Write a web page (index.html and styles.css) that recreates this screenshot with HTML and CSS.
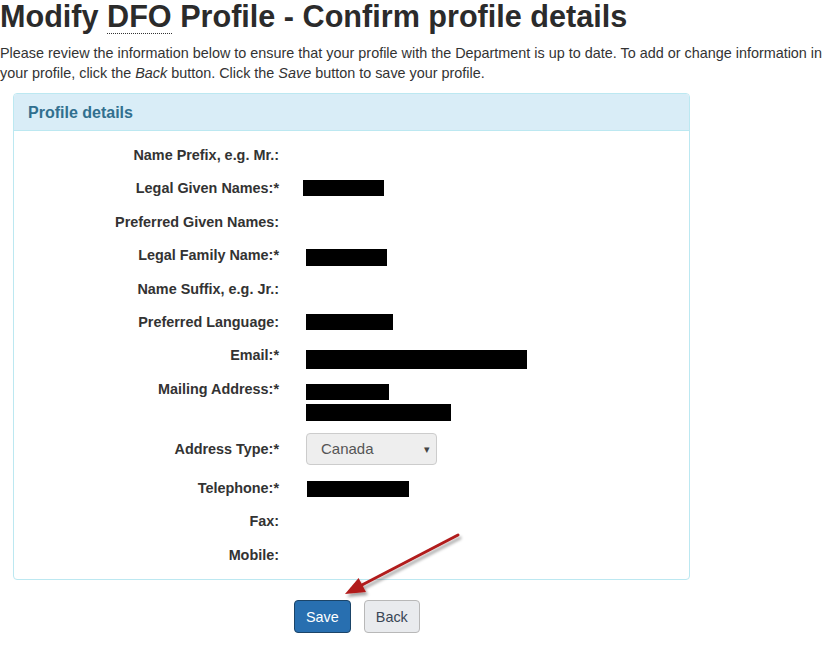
FILE: index.html
```html
<!DOCTYPE html>
<html>
<head>
  <meta charset="UTF-8">
  <title>Modify DFO Profile - Confirm profile details</title>
  <link rel="stylesheet" href="styles.css">
</head>
<body>
  <div class="page">
    <h1>Modify <abbr title="Fisheries and Oceans Canada">DFO</abbr> Profile - Confirm profile details</h1>
    <p class="intro">Please review the information below to ensure that your profile with the Department is up to date. To add or change information in your profile, click the <em>Back</em> button. Click the <em>Save</em> button to save your profile.</p>

    <div class="panel">
      <div class="panel-heading">Profile details</div>
      <div class="panel-body">
        <div class="field">
          <div class="field-label">Name Prefix, e.g. Mr.:</div>
          <div class="field-value"></div>
        </div>
        <div class="field">
          <div class="field-label">Legal Given Names:*</div>
          <div class="field-value"><span class="redact redact-shift" style="width: 81px"></span></div>
        </div>
        <div class="field">
          <div class="field-label">Preferred Given Names:</div>
          <div class="field-value"></div>
        </div>
        <div class="field">
          <div class="field-label">Legal Family Name:*</div>
          <div class="field-value"><span class="redact redact-low" style="width: 81px"></span></div>
        </div>
        <div class="field">
          <div class="field-label">Name Suffix, e.g. Jr.:</div>
          <div class="field-value"></div>
        </div>
        <div class="field">
          <div class="field-label">Preferred Language:</div>
          <div class="field-value"><span class="redact redact-high" style="width: 87px"></span></div>
        </div>
        <div class="field">
          <div class="field-label">Email:*</div>
          <div class="field-value"><span class="redact redact-tall" style="width: 221px"></span></div>
        </div>
        <div class="field field-address">
          <div class="field-label">Mailing Address:*</div>
          <div class="field-value">
            <span class="redact redact-line1" style="width: 83px"></span>
            <span class="redact redact-line2" style="width: 145px"></span>
          </div>
        </div>
        <div class="field field-select">
          <div class="field-label">Address Type:*</div>
          <div class="field-value">
            <div class="select">
              <span>Canada</span>
              <span class="select-caret">&#9662;</span>
            </div>
          </div>
        </div>
        <div class="field">
          <div class="field-label">Telephone:*</div>
          <div class="field-value"><span class="redact redact-phone" style="width: 102px"></span></div>
        </div>
        <div class="field">
          <div class="field-label">Fax:</div>
          <div class="field-value"></div>
        </div>
        <div class="field">
          <div class="field-label">Mobile:</div>
          <div class="field-value"></div>
        </div>
      </div>
    </div>

    <div class="actions">
      <button class="btn btn-primary" type="button">Save</button>
      <button class="btn btn-default" type="button">Back</button>
    </div>

    <!-- red pointer over the save button -->
    <svg class="pointer" width="832" height="649" viewBox="0 0 832 649">
      <defs>
        <filter id="drop" x="-20%" y="-20%" width="140%" height="140%">
          <feDropShadow dx="2" dy="3" stdDeviation="1.6" flood-color="#000" flood-opacity="0.35"/>
        </filter>
      </defs>
      <g filter="url(#drop)">
        <line x1="458" y1="535" x2="360" y2="586" stroke="#b11b1b" stroke-width="3" stroke-linecap="round"/>
        <polygon points="345,594 358.6,578 366,592" fill="#b11b1b"/>
      </g>
    </svg>
  </div>
</body>
</html>
```

FILE: styles.css
```css
body {
  margin: 0;
  font-family: "Liberation Sans", Arial, Helvetica, sans-serif;
  font-size: 14.4px;
  line-height: 20px;
  color: #333;
  background: #fff;
}
.page {
  position: relative;
  width: 832px;
  height: 649px;
  overflow: hidden;
}
h1 {
  font-size: 30.6px;
  font-weight: bold;
  line-height: 33px;
  margin: 0 0 10px;
  color: #2b2b2b;
}
abbr[title] {
  text-decoration: none;
  border-bottom: 1px dotted #333;
  cursor: help;
}
.intro {
  margin: 0 0 10px;
}

/* panel, bootstrap "info" flavour */
.panel {
  margin-left: 13px;
  width: 675px;
  border: 1px solid #bce8f1;
  border-radius: 4px;
}
.panel-heading {
  background-color: #d9edf7;
  color: #31708f;
  border-bottom: 1px solid #bce8f1;
  border-radius: 3px 3px 0 0;
  padding: 10px 14px 9px;
  font-size: 16px;
  font-weight: bold;
  line-height: 17px;
}
.panel-body {
  padding: 8px 0 7px;
}

.field {
  display: flex;
  min-height: 33.4px;
}
.field-label {
  width: 265px;
  flex-shrink: 0;
  padding-top: 6px;
  text-align: right;
  font-weight: bold;
}
.field-value {
  margin-left: 27px;
}
.field-address {
  min-height: 59px;
}
.field-select {
  min-height: 34px;
  margin-bottom: 6px;
}
.field-select .field-label {
  padding-top: 7px;
}

/* blacked-out values */
.redact {
  display: block;
  background: #000;
  height: 16px;
  margin-top: 9px;
}
.redact-shift {
  margin-top: 8px;
  margin-left: -3px;
}
.redact-low {
  height: 17px;
  margin-top: 10px;
}
.redact-high {
  margin-top: 8px;
}
.redact-tall {
  height: 19px;
  margin-top: 11px;
}
.redact-line1 {
  margin-top: 11px;
}
.redact-line2 {
  height: 17px;
  margin-top: 4px;
}
.redact-phone {
  margin-left: 1px;
}

.select {
  display: flex;
  align-items: center;
  justify-content: space-between;
  box-sizing: border-box;
  width: 131px;
  height: 32px;
  margin-top: 1px;
  padding: 0 6px 0 14px;
  background: #eee;
  border: 1px solid #ccc;
  border-radius: 4px;
  color: #555;
  font-size: 15px;
}
.select-caret {
  font-size: 11px;
  color: #444;
}

.actions {
  display: flex;
  gap: 13px;
  margin-top: 20px;
  padding-left: 294px;
}
.btn {
  font-family: inherit;
  font-size: 14.4px;
  line-height: 20px;
  padding: 6px 11px 5px;
  border: 1px solid transparent;
  border-radius: 4px;
  cursor: pointer;
}
.btn-primary {
  color: #fff;
  background-color: #286fb0;
  border-color: #1b4468;
}
.btn-default {
  color: #3a4656;
  background-color: #e9ebee;
  border-color: #b8b8b8;
}

.pointer {
  position: absolute;
  left: 0;
  top: 0;
  pointer-events: none;
}
```
